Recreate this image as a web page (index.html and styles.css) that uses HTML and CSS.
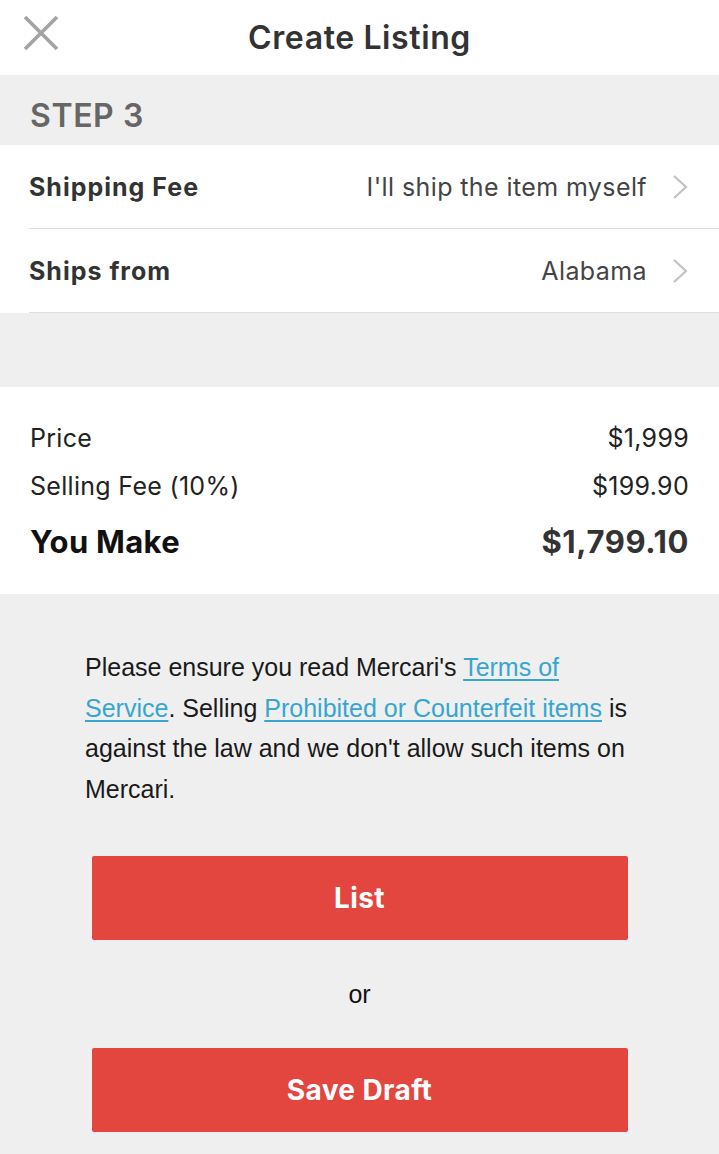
FILE: index.html
```html
<!DOCTYPE html>
<html lang="en">
<head>
<meta charset="utf-8">
<title>Create Listing</title>
<link rel="stylesheet" href="styles.css">
</head>
<body>
<div class="screen">
  <header class="topbar">
    <button class="close" aria-label="Close">
      <svg width="36" height="36" viewBox="0 0 36 36"><path d="M2 2 L34 34 M34 2 L2 34" stroke="#a3a3a3" stroke-width="3.6" fill="none"/></svg>
    </button>
    <h1 class="title">Create Listing</h1>
  </header>

  <div class="step">STEP 3</div>

  <section class="rows">
    <div class="row">
      <span class="row-label">Shipping Fee</span>
      <span class="row-value">I'll ship the item myself</span>
      <svg class="chev" width="16" height="24" viewBox="0 0 16 24"><path d="M2 1 L14 12 L2 23" stroke="#c2c2c2" stroke-width="2.2" fill="none"/></svg>
    </div>
    <div class="row">
      <span class="row-label">Ships from</span>
      <span class="row-value">Alabama</span>
      <svg class="chev" width="16" height="24" viewBox="0 0 16 24"><path d="M2 1 L14 12 L2 23" stroke="#c2c2c2" stroke-width="2.2" fill="none"/></svg>
    </div>
  </section>

  <div class="gap"></div>

  <section class="summary">
    <div class="sum-row"><span>Price</span><span>$1,999</span></div>
    <div class="sum-row"><span>Selling Fee (10%)</span><span>$199.90</span></div>
    <div class="sum-row total"><span>You Make</span><span>$1,799.10</span></div>
  </section>

  <section class="footer">
    <p class="terms">Please ensure you read Mercari's <a href="#">Terms of Service</a>. Selling <a href="#">Prohibited or Counterfeit items</a> is against the law and we don't allow such items on Mercari.</p>
    <button class="btn">List</button>
    <div class="or">or</div>
    <button class="btn">Save Draft</button>
  </section>
</div>
</body>
</html>
```

FILE: styles.css
```css
* { box-sizing: border-box; }
html, body { margin: 0; padding: 0; }
body {
  background: #efefef;
  font-family: "Inter", "Roboto", "Liberation Sans", sans-serif;
  color: #333;
}
.screen { width: 719px; min-height: 1154px; background: #efefef; }

.topbar {
  height: 75px;
  background: #fff;
  display: flex;
  align-items: center;
  justify-content: center;
  position: relative;
}
.close {
  position: absolute;
  left: 23px;
  top: 15px;
  width: 36px;
  height: 36px;
  padding: 0;
  border: 0;
  background: none;
  display: flex;
}
.title {
  margin: 0;
  font-size: 32px;
  font-weight: 600;
  color: #333;
  letter-spacing: 0.6px;
  padding-bottom: 1px;
}

.step {
  height: 70px;
  display: flex;
  align-items: center;
  padding-left: 30px;
  font-size: 32px;
  font-weight: 600;
  color: #666;
  letter-spacing: 0.6px;
  padding-top: 10px;
}

.rows { background: #fff; }
.row {
  height: 84px;
  display: flex;
  align-items: center;
  margin-left: 29px;
  padding-right: 31px;
  border-bottom: 1.5px solid #dedede;
}
.row-label { font-size: 25px; font-weight: 700; color: #333; flex: 1; letter-spacing: 1px; }
.row-value { font-size: 25px; color: #444; margin-right: 25px; letter-spacing: 0.4px; }
.chev { display: block; }

.gap { height: 74px; }

.summary {
  background: #fff;
  height: 207px;
  padding: 27px 30px 0 30px;
}
.sum-row {
  display: flex;
  justify-content: space-between;
  align-items: center;
  font-size: 25px;
  color: #222;
  height: 48px;
  letter-spacing: 0.3px;
}
.sum-row.total {
  font-size: 31px;
  font-weight: 700;
  color: #111;
  height: 62px;
}
.sum-row.total span:last-child { color: #333; letter-spacing: 0.6px; }

.footer {
  padding: 53px 0 0 0;
  display: flex;
  flex-direction: column;
  align-items: center;
}
.terms {
  margin: 0;
  width: 556px;
  align-self: flex-start;
  margin-left: 85px;
  font-family: "Liberation Sans", Arial, sans-serif;
  font-size: 25px;
  line-height: 40.5px;
  color: #1a1a1a;
}
.terms a { color: #36a6d0; text-decoration: underline; text-underline-offset: 3px; }
.btn {
  width: 536px;
  height: 84px;
  border: 0;
  border-radius: 2px;
  background: #e2463f;
  color: #fff;
  font-family: "Inter", "Roboto", sans-serif;
  font-size: 28px;
  font-weight: 700;
  letter-spacing: 0.4px;
  margin-top: 47px;
}
.or {
  font-family: "Liberation Sans", Arial, sans-serif;
  font-size: 25px;
  color: #111;
  height: 108px;
  display: flex;
  align-items: center;
}
.or + .btn { margin-top: 0; }
```
